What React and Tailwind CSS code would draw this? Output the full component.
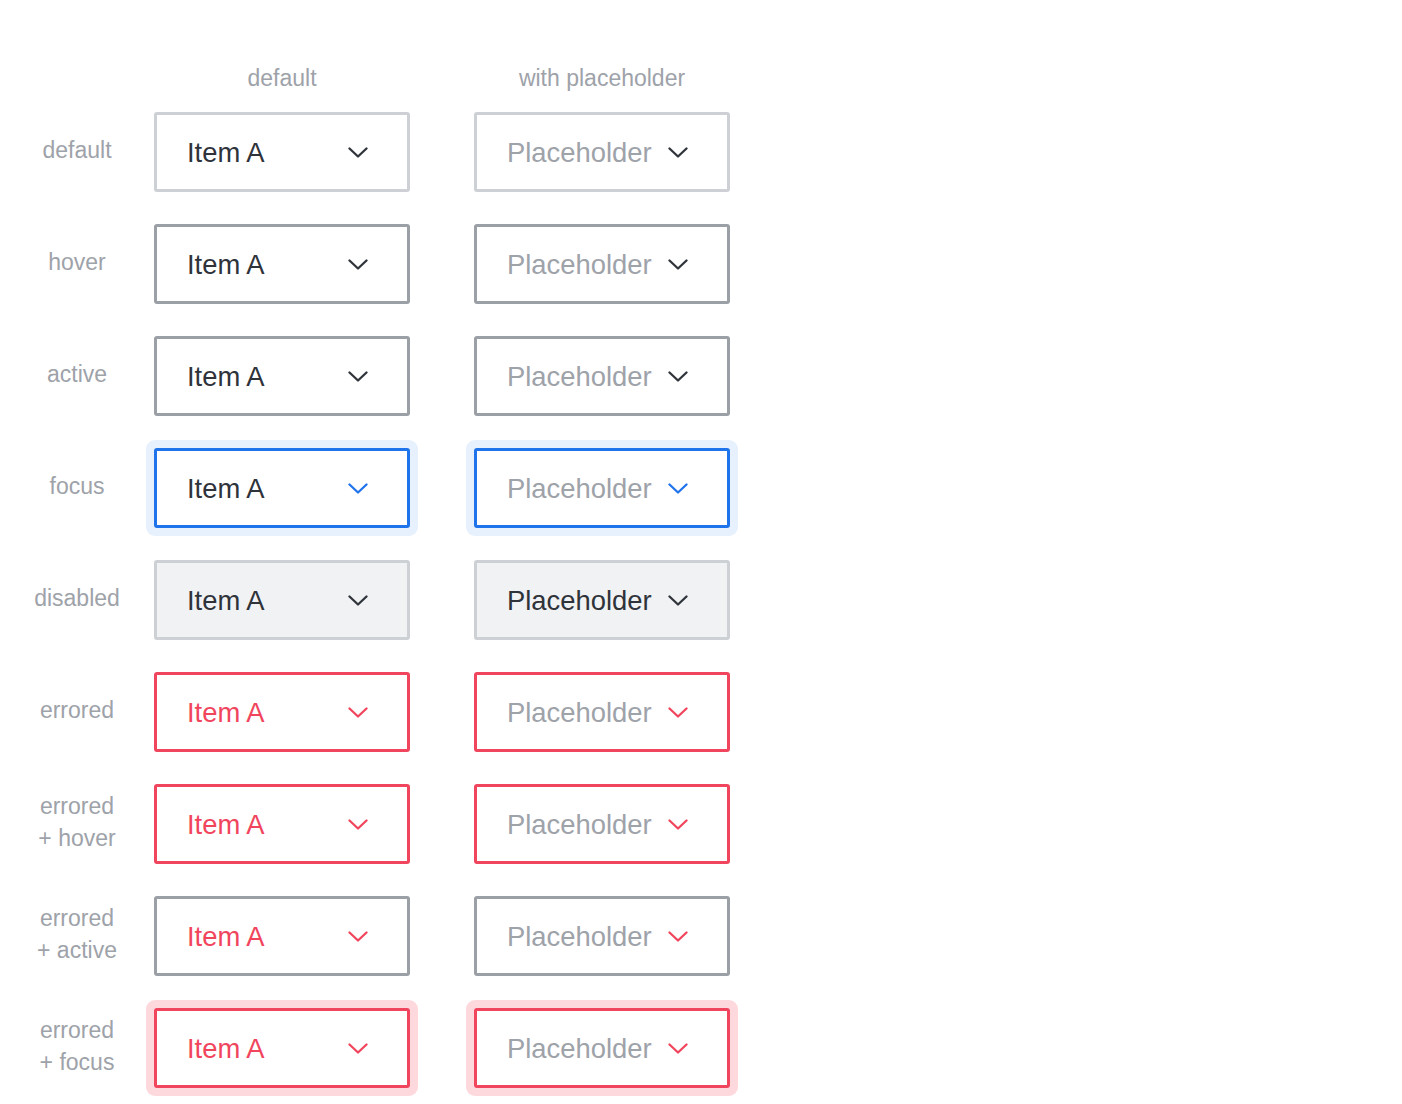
import React from "react";

const rows = [
  { label: ["default"], state: "default" },
  { label: ["hover"], state: "hover" },
  { label: ["active"], state: "hover" },
  { label: ["focus"], state: "focus" },
  { label: ["disabled"], state: "disabled" },
  { label: ["errored"], state: "error" },
  { label: ["errored", "+ hover"], state: "error" },
  { label: ["errored", "+ active"], state: "errorActive" },
  { label: ["errored", "+ focus"], state: "errorFocus" },
];

const boxStyles = {
  default: "border-[#cdd0d4] bg-white",
  hover: "border-[#9b9fa6] bg-white",
  focus: "border-[#1f74ec] bg-white shadow-[0_0_0_8px_#e7f0fd]",
  disabled: "border-[#cdd0d4] bg-[#f1f2f4]",
  error: "border-[#f1455d] bg-white",
  errorActive: "border-[#9b9fa6] bg-white",
  errorFocus: "border-[#f1455d] bg-white shadow-[0_0_0_8px_#fdd9dd]",
};

const chevronColor = {
  default: "text-[#2f333a]",
  hover: "text-[#2f333a]",
  focus: "text-[#1f74ec]",
  disabled: "text-[#2f333a]",
  error: "text-[#f1455d]",
  errorActive: "text-[#f1455d]",
  errorFocus: "text-[#f1455d]",
};

function Chevron({ className }) {
  return (
    <svg
      className={className}
      width="20"
      height="11"
      viewBox="0 0 20 11"
      fill="none"
      stroke="currentColor"
      strokeWidth="2.3"
      strokeLinecap="round"
      strokeLinejoin="round"
    >
      <path d="M1.5 1.5 L10 9.5 L18.5 1.5" />
    </svg>
  );
}

function SelectBox({ state, placeholder }) {
  const isError = state.startsWith("error");
  let textClass = "text-[#2f333a]";
  if (placeholder && state !== "disabled") textClass = "text-[#9ea2a9]";
  else if (!placeholder && isError) textClass = "text-[#f1455d]";

  return (
    <div
      className={`flex h-20 w-64 items-center justify-between rounded-[3px] border-[3px] pl-[30px] pr-[39px] ${boxStyles[state]}`}
    >
      <span className={`pt-0.5 text-[27.4px] leading-none ${textClass}`}>
        {placeholder ? "Placeholder" : "Item A"}
      </span>
      <Chevron className={chevronColor[state]} />
    </div>
  );
}

export default function App() {
  return (
    <div
      className="min-h-screen bg-white pt-[62px]"
      style={{ fontFamily: '"Liberation Sans", Arial, sans-serif' }}
    >
      <div className="flex h-8 items-center text-[23px] text-[#9ea2a9]">
        <div className="w-[154px]" />
        <div className="w-64 text-center">default</div>
        <div className="ml-16 w-64 text-center">with placeholder</div>
      </div>
      <div className="mt-[18px] flex flex-col gap-8">
        {rows.map((row, i) => (
          <div className="flex items-center" key={i}>
            <div className="mb-1 flex w-[154px] flex-col items-center text-[23px] leading-8 text-[#9ea2a9]">
              {row.label.map((line) => (
                <span key={line}>{line}</span>
              ))}
            </div>
            <SelectBox state={row.state} />
            <div className="ml-16">
              <SelectBox state={row.state} placeholder />
            </div>
          </div>
        ))}
      </div>
    </div>
  );
}
